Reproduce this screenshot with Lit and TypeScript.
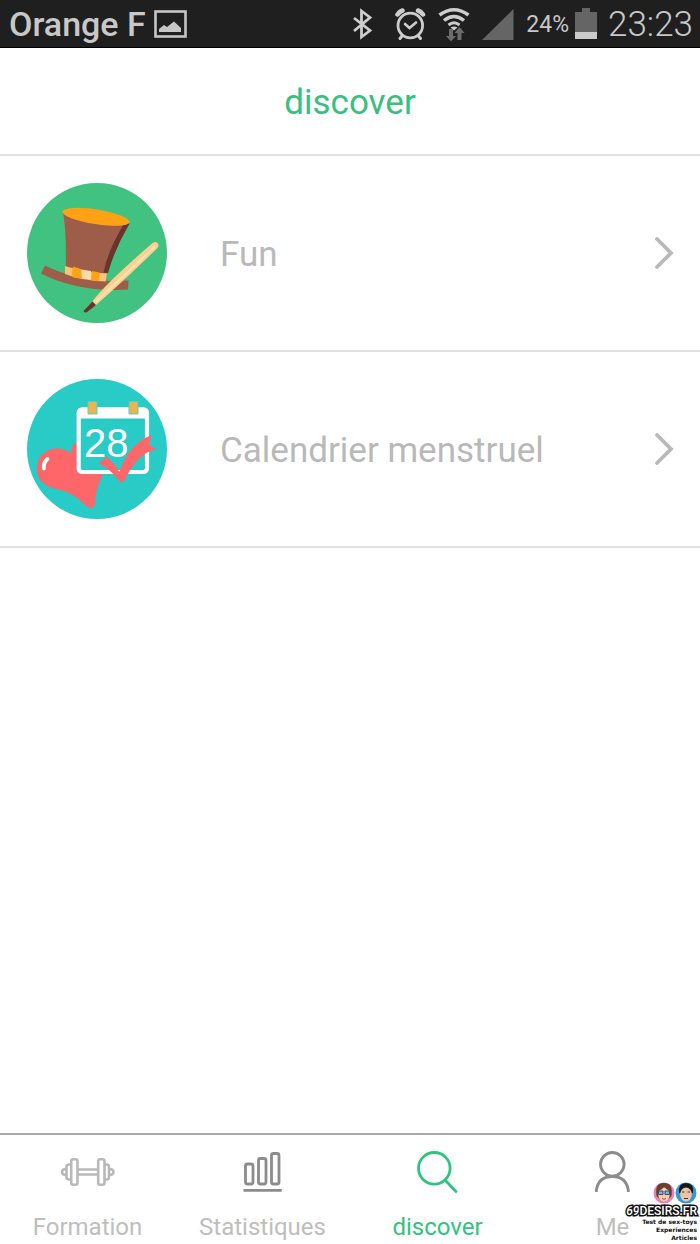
import { LitElement, html, css, svg } from "lit";
import { customElement, property, state } from "lit/decorators.js";
import { classMap } from "lit/directives/class-map.js";

@customElement("status-bar")
class StatusBar extends LitElement {
  static styles = css`
    :host {
      display: block;
      background: #1f1f1f;
      color: #c8c8c8;
      border-bottom: 1px solid #000;
    }
    .bar {
      display: flex;
      align-items: center;
      justify-content: space-between;
      height: 47px;
      padding: 0 7px 0 9px;
    }
    .group {
      display: flex;
      align-items: center;
    }
    svg {
      display: block;
      flex: none;
    }
    .carrier {
      font-size: 34px;
      font-weight: 500;
      line-height: 48px;
      margin-right: 8px;
    }
    .indicators {
      display: flex;
      gap: 12px;
      margin-right: 12px;
    }
    .battery {
      display: flex;
      align-items: center;
      gap: 6px;
      margin-right: 11px;
    }
    .percent {
      font-size: 23px;
      line-height: 48px;
      padding-top: 2px;
    }
    .clock {
      font-size: 35px;
      font-weight: 300;
      line-height: 48px;
      padding-top: 2px;
    }
  `;

  render() {
    return html`
      <div class="bar">
        <div class="group">
          <span class="carrier">Orange F</span>
          <svg width="33" height="48" viewBox="154 0 33 48" aria-hidden="true">
            <rect x="155.500" y="11.500" width="30" height="25" fill="none" stroke="#c6c6c6" stroke-width="2.600" />
            <path d="M159 32v-3l5-4 3 2 7-5.500 7 6.500v4z" fill="#c6c6c6" />
          </svg>
        </div>
        <div class="group">
          <div class="indicators">
            <svg width="30" height="48" viewBox="352 0 30 48" aria-hidden="true">
              <path d="M354 18l16 12.500-8.500 6.500V11l8.500 6.500L354 31" fill="none" stroke="#cdcdcd" stroke-width="2.800" />
            </svg>
            <svg width="32" height="48" viewBox="393 0 32 48" aria-hidden="true">
              <g fill="none" stroke="#cdcdcd" stroke-linecap="round">
                <circle cx="409.300" cy="25.500" r="12.300" stroke-width="2.800" />
                <path d="M404 24l4.500 4 6.500-5.500" stroke-width="2.600" />
                <path d="M396.500 14.500q2-3 5-4M422 14.500q-2-3-5-4" stroke-width="4.500" />
                <path d="M401 36l-2 2.500M417.500 36l2 2.500" stroke-width="3" />
              </g>
            </svg>
            <svg width="32" height="48" viewBox="438 0 32 48" aria-hidden="true">
              <g fill="none" stroke="#cdcdcd">
                <path d="M439.500 15q14.500-10.500 29 0" stroke-width="3.600" />
                <path d="M444 20.500q10-8 20 0" stroke-width="3.400" />
                <path d="M448.500 25q5.500-4.500 11 0" stroke-width="3" />
              </g>
              <path d="M450.500 27.500q3.500-2 7 0l-3.500 3z" fill="#cdcdcd" />
              <path d="M449 29h4v7h3l-5 5.500-5-5.500h3zM457.500 40v-7h-3l5-6 5 6h-3v7z" fill="#6c6c6c" />
            </svg>
            <svg width="32" height="48" viewBox="482 0 32 48" aria-hidden="true">
              <path d="M482 40L513.500 9v31z" fill="#656565" />
            </svg>
          </div>
          <div class="battery">
            <span class="percent">24%</span>
            <svg width="22" height="48" viewBox="574 0 22 48" aria-hidden="true">
              <path d="M574 12h7V8h8v4h7v27h-22z" fill="#656565" />
              <path d="M574 32h22v7h-22z" fill="#cbcbcb" />
            </svg>
          </div>
          <span class="clock">23:23</span>
        </div>
      </div>
    `;
  }
}

const hat = svg`
  <circle cx="97" cy="252.500" r="70" fill="#41c280" />
  <path d="M45 265q36 18 83.500 15l-.500 9q-50 3-87-16z" fill="#9d5d48" />
  <path d="M63 211q4 24 2.500 60l39.500 6q8-25 24.500-54z" fill="#9d5d48" />
  <path d="M129.500 223L123 225q-15 25-19.500 47l4.500.500q7-25 21.500-49.500z" fill="#6b332c" />
  <ellipse cx="96" cy="216.300" rx="34" ry="7.300" transform="rotate(9 96 216.300)" fill="#ffa114" />
  <path d="M65 265.500q20 6.500 42 7.500l-1.500 8q-23-.500-40.500-7.500z" fill="#fdc376" />
  <path d="M81 269l10 1.500v8.500l-10-1.500z" fill="#ffdca8" />
  <path d="M73 266l8 2.500 1 9.500-9-1-1-4zM92 270.500l7.500 1.500-.500 9-8-1.500z" fill="#ffa114" />
  <path d="M92 301.500q12-17 60-58.500 2.500-2.500 5-1 3 2.500 0 6Q123 281 95.500 305z" fill="#fbd091" />
  <path d="M96 301q22-20 59-55" fill="none" stroke="#ffe3b3" stroke-width="2" />
  <path d="M92.500 301l3.500 3.500-9.500 7.500q-2 .500-3-1.500z" fill="#6f302a" />
`;

const calendar = svg`
  <circle cx="97" cy="449" r="70" fill="#28cbc6" />
  <path d="M77 441.500Q71 446 71 453.500Q64 448 56 448.500Q36.500 451 36.700 470Q38 484 54 488.500Q72 491 85 505Q92 511 95 504.500Q95 489 103.500 473H77z" fill="#fe6669" />
  <rect x="78.700" y="409.300" width="68.300" height="62.700" rx="3.500" fill="#28cbc6" stroke="#fff" stroke-width="4.200" />
  <path d="M79 409h68v9.500H79z" fill="#fff" />
  <path d="M88 401.500h9v12.500h-9zM129 401.500h9v12.500h-9z" fill="#edb34d" stroke="#55cfc4" />
  <text x="84" y="457" font-family="'Liberation Sans', sans-serif" font-size="40" fill="#fff">28</text>
  <path d="M98.300 463.300L106.700 456.700Q114 463 119.300 471.700Q129 444 151.500 435L149 445L156.700 449.500Q138 452 125 479.500Q121.500 485 118.500 480Q109 468 98.300 463.300z" fill="#fe6669" />
  <path d="M47.500 459q-4.500 4-3.500 9.500" fill="none" stroke="#fff" stroke-width="3.800" stroke-linecap="round" />
`;

@customElement("discover-row")
class DiscoverRow extends LitElement {
  @property() label = "";
  @property() kind = "fun";

  static styles = css`
    :host {
      display: block;
      border-bottom: 2px solid #e1e1e1;
    }
    .row {
      display: flex;
      align-items: center;
      padding: 27px 26px;
      color: #b9b9b9;
      text-decoration: none;
    }
    .picture {
      display: block;
      flex: none;
      margin-right: 52px;
    }
    .label {
      flex: 1;
      font-size: 35px;
      line-height: 48px;
      padding-top: 4px;
    }
    .chevron {
      flex: none;
    }
  `;

  render() {
    const fun = this.kind === "fun";
    return html`
      <a class="row" href="#${this.kind}">
        <svg class="picture" width="142" height="140" viewBox=${fun ? "26 182.500 142 140" : "26 379 142 140"} aria-hidden="true">
          ${fun ? hat : calendar}
        </svg>
        <span class="label">${this.label}</span>
        <svg class="chevron" width="20" height="34" viewBox="0 0 20 34" aria-hidden="true">
          <path d="M3 3l14 14L3 31" fill="none" stroke="#b9b9b9" stroke-width="3.800" stroke-linecap="round" />
        </svg>
      </a>
    `;
  }
}

const dumbbell = svg`
  <g fill="none" stroke="#b9b9b9" stroke-width="2.600">
    <rect x="71.200" y="1159.200" width="6.300" height="25.500" rx="2" />
    <rect x="98.200" y="1159.200" width="6.300" height="25.500" rx="2" />
    <path d="M71 1164.500h-2q-2.500 0-2.500 2.500v10q0 2.500 2.500 2.500h2M104.500 1164.500h2q2.500 0 2.500 2.500v10q0 2.500-2.500 2.500h-2" />
    <path d="M66.500 1169q-4.500 0-4.500 3t4.500 3M109 1169q4.500 0 4.500 3t-4.500 3M78 1169.500h20M78 1174.500h20" />
  </g>`;

const bars = svg`
  <g fill="none" stroke="#8c8c8c" stroke-width="2.800">
    <rect x="245.500" y="1164" width="7.500" height="20" rx="2" />
    <rect x="258.500" y="1158.500" width="7.500" height="25.500" rx="2" />
    <rect x="271.500" y="1153.500" width="7.500" height="30.500" rx="2" />
    <path d="M243.500 1190.300h38.200" />
  </g>`;

const magnifier = svg`
  <g fill="none" stroke="#2fc57d" stroke-width="2.800" stroke-linecap="round">
    <circle cx="434.300" cy="1168.300" r="15.800" />
    <path d="M445.500 1180.500l10.500 11" />
  </g>`;

const person = svg`
  <g fill="none" stroke="#8c8c8c" stroke-width="2.800">
    <circle cx="612.300" cy="1164.300" r="11.800" />
    <path d="M596.300 1192v-1.500q2-14 16-14t16 14v1.500" />
  </g>`;

const tabs = [
  { id: "formation", label: "Formation", icon: dumbbell, box: "58 1150 60 44" },
  { id: "statistiques", label: "Statistiques", icon: bars, box: "233 1150 60 44" },
  { id: "discover", label: "discover", icon: magnifier, box: "408 1150 60 44" },
  { id: "me", label: "Me", icon: person, box: "583 1150 60 44" },
];

@customElement("tab-bar")
class TabBar extends LitElement {
  @state() current = "discover";

  static styles = css`
    :host {
      display: block;
      border-top: 2px solid #a9a9a9;
    }
    .tabs {
      display: grid;
      grid-template-columns: repeat(4, 1fr);
    }
    .tab {
      display: flex;
      flex-direction: column;
      align-items: center;
      gap: 18px;
      padding: 15px 0 2px;
      color: #bebebe;
      text-decoration: none;
      font-size: 24px;
      line-height: 30px;
    }
    .active {
      color: #2fc57d;
    }
    svg {
      display: block;
    }
  `;

  render() {
    return html`
      <nav class="tabs">
        ${tabs.map(
          (tab) => html`
            <a
              class=${classMap({ tab: true, active: tab.id === this.current })}
              href="#${tab.id}"
              @click=${() => (this.current = tab.id)}
            >
              <svg width="60" height="44" viewBox=${tab.box} aria-hidden="true">${tab.icon}</svg>
              <span>${tab.label}</span>
            </a>
          `,
        )}
      </nav>
    `;
  }
}

@customElement("site-badge")
class SiteBadge extends LitElement {
  static styles = css`
    :host {
      display: block;
      color: #111;
      text-align: right;
    }
    svg {
      display: block;
      margin-left: auto;
    }
    .name {
      font-size: 12px;
      line-height: 14px;
      font-weight: 500;
      color: #fff;
      -webkit-text-stroke: 3px #111;
      paint-order: stroke fill;
    }
    .name-text {
      font-style: italic;
    }
    .line {
      font-family: "DejaVu Sans", sans-serif;
      font-size: 6px;
      line-height: 8px;
      font-weight: 700;
    }
  `;

  render() {
    return html`
      <svg width="45" height="22" viewBox="653 1183 45 22" aria-hidden="true">
        <circle cx="665" cy="1194" r="10.500" fill="#e583b8" />
        <path d="M657.500 1197q-2-13 7-13 10 0 8 13l-3 3h-9z" fill="#67402e" />
        <ellipse cx="665" cy="1195.500" rx="5.800" ry="7" fill="#f4cbb0" />
        <path d="M658 1192q6-1 7-5 2 4 7 5l-1-6-6-2-6 3z" fill="#67402e" />
        <path d="M659.500 1192h4.500v3.500h-4.500zM666 1192h4.500v3.500H666z" fill="#72b6e5" stroke="#4a4468" />
        <path d="M663 1199.500q2 1.500 4 0" fill="none" stroke="#c33f4b" />
        <circle cx="687" cy="1194" r="10.500" fill="#2f9ad9" />
        <path d="M680 1194q-1-10 7-10 8.500 0 7 10z" fill="#17191f" />
        <ellipse cx="687" cy="1195.500" rx="5.800" ry="7" fill="#efc3a2" />
        <path d="M681 1192q1-4 6-4t6 4l-1-5-5-2-5 2z" fill="#17191f" />
        <path d="M683 1193h2.500M688.500 1193h2.500M685 1199.500h4" fill="none" stroke="#503326" />
      </svg>
      <div class="name"><span class="name-text">69</span>DESIRS.FR</div>
      <div class="line">Test de sex-toys</div>
      <div class="line">Experiences</div>
      <div class="line">Articles</div>
    `;
  }
}

@customElement("app-root")
class AppRoot extends LitElement {
  static styles = css`
    :host {
      display: flex;
      flex-direction: column;
      position: relative;
      min-height: 100vh;
      background: #fff;
      font-family: Roboto, "Liberation Sans", sans-serif;
    }
    .title {
      margin: 0;
      padding: 31px 0 27px;
      border-bottom: 2px solid #e1e1e1;
      color: #38c07d;
      font-size: 35px;
      font-weight: 400;
      line-height: 48px;
      text-align: center;
    }
    .list {
      flex: 1;
    }
    .badge {
      position: absolute;
      right: 3px;
      bottom: 2px;
    }
  `;

  render() {
    return html`
      <status-bar></status-bar>
      <h1 class="title">discover</h1>
      <main class="list">
        <discover-row label="Fun" kind="fun"></discover-row>
        <discover-row label="Calendrier menstruel" kind="calendar"></discover-row>
      </main>
      <tab-bar></tab-bar>
      <site-badge class="badge"></site-badge>
    `;
  }
}
